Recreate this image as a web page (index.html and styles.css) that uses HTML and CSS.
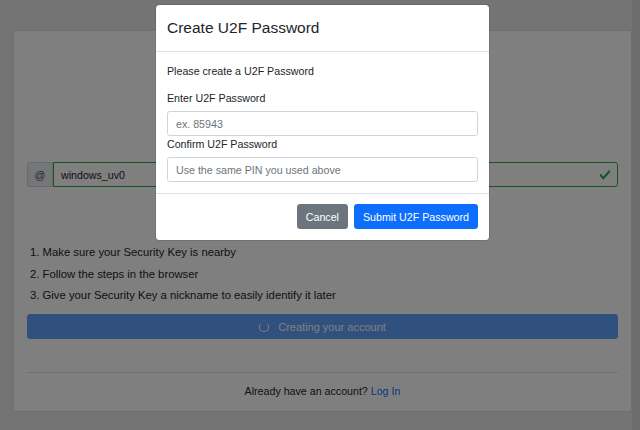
FILE: index.html
```html
<!DOCTYPE html>
<html lang="en">
<head>
<meta charset="utf-8">
<title>Create U2F Password</title>
<link rel="stylesheet" href="styles.css">
</head>
<body>
<main class="page">
  <section class="card">
    <div class="card-top"></div>
    <div class="input-group">
      <span class="addon">@</span>
      <div class="field valid">
        <span class="value">windows_uv0</span>
        <svg class="check" viewBox="0 0 8 8" width="12" height="12"><path fill="#28a745" d="M2.3 6.73L.6 4.53c-.4-1.04.46-1.4 1.1-.8l1.1 1.4 3.4-3.8c.6-.63 1.6-.27 1.2.7l-4 4.6c-.43.5-.8.4-1.1.1z"/></svg>
      </div>
    </div>
    <ol class="steps">
      <li>Make sure your Security Key is nearby</li>
      <li>Follow the steps in the browser</li>
      <li>Give your Security Key a nickname to easily identify it later</li>
    </ol>
    <button class="btn-create" disabled><span class="spinner"></span>Creating your account</button>
    <hr class="divider">
    <p class="login">Already have an account? <a href="#">Log In</a></p>
  </section>
</main>
<div class="backdrop"></div>
<div class="modal">
  <div class="modal-header">
    <h5 class="modal-title">Create U2F Password</h5>
  </div>
  <div class="modal-body">
    <p class="intro">Please create a U2F Password</p>
    <label class="label">Enter U2F Password</label>
    <div class="text-input placeholder">ex. 85943</div>
    <label class="label">Confirm U2F Password</label>
    <div class="text-input placeholder">Use the same PIN you used above</div>
  </div>
  <div class="modal-footer">
    <button class="btn btn-secondary">Cancel</button>
    <button class="btn btn-primary">Submit U2F Password</button>
  </div>
</div>
</body>
</html>
```
FILE: styles.css
```css
html {
  background: linear-gradient(to right, #e8e8e8 calc(100% - 8px), #dadada 0);
  min-height: 100%;
}
body {
  margin: 0;
  font-family: "Liberation Sans", Arial, sans-serif;
  font-size: 10.67px;
  line-height: 16px;
  color: #212529;
}
.page {
  padding: 30px 8px 0 13px;
}
.card {
  background: #fff;
  border: 1px solid rgba(0, 0, 0, 0.125);
  border-radius: 3px;
  padding: 0 13px 12px 13px;
  display: flex;
  flex-direction: column;
}
.card-top {
  height: 131px;
}
.input-group {
  display: flex;
  height: 25px;
}
.addon {
  width: 24px;
  display: flex;
  align-items: center;
  justify-content: center;
  background: #e9ecef;
  border: 1px solid #ced4da;
  border-radius: 2.7px 0 0 2.7px;
  color: #495057;
}
.field {
  flex: 1;
  display: flex;
  align-items: center;
  justify-content: space-between;
  border: 1px solid #28a745;
  border-radius: 0 2.7px 2.7px 0;
  padding: 0 6px 0 7px;
  color: #212529;
  background: #fff;
}
.check {
  display: block;
}
.steps {
  margin: 57px 0 0;
  padding: 0 0 0 3px;
  list-style-position: inside;
  font-size: 11.3px;
  display: flex;
  flex-direction: column;
  gap: 5.5px;
}
.btn-create {
  margin-top: 11px;
  height: 25px;
  border: 1px solid #0d6efd;
  background: #0d6efd;
  opacity: 0.65;
  color: #fff;
  border-radius: 2.7px;
  font: inherit;
  font-size: 11px;
  display: flex;
  align-items: center;
  justify-content: center;
  gap: 9px;
}
.spinner {
  width: 8px;
  height: 8px;
  border: 1.6px solid #fff;
  border-top-color: transparent;
  border-radius: 50%;
}
.divider {
  margin: 33px 0 0;
  border: 0;
  border-top: 1px solid rgba(0, 0, 0, 0.1);
}
.login {
  margin: 10px 0 0;
  text-align: center;
}
.login a {
  color: #0d6efd;
  text-decoration: none;
}
.backdrop {
  position: absolute;
  top: 0;
  left: 0;
  width: 100%;
  height: 100%;
  z-index: 10;
  background: rgba(0, 0, 0, 0.5);
}
.modal {
  position: absolute;
  z-index: 11;
  top: 5px;
  left: 156px;
  width: 333px;
  background: #fff;
  border-radius: 3.5px;
  box-shadow: 0 0 0 1px rgba(0, 0, 0, 0.1);
}
.modal-header {
  padding: 11px;
  border-bottom: 1px solid #dee2e6;
}
.modal-title {
  margin: 0;
  font-size: 15.5px;
  line-height: 24px;
  font-weight: 400;
}
.modal-body {
  padding: 11px;
  display: flex;
  flex-direction: column;
}
.intro {
  margin: 0 0 11px;
}
.label {
  margin-bottom: 5px;
}
.text-input {
  height: 25px;
  box-sizing: border-box;
  border: 1px solid #ced4da;
  border-radius: 2.7px;
  padding: 0 8px;
  display: flex;
  align-items: center;
}
.placeholder {
  color: #6c757d;
}
.modal-footer {
  border-top: 1px solid #dee2e6;
  padding: 10px 11px 11px;
  display: flex;
  justify-content: flex-end;
  gap: 6px;
}
.btn {
  height: 25px;
  padding: 0 8px;
  border-radius: 2.7px;
  font: inherit;
  color: #fff;
  border: 1px solid transparent;
}
.btn-secondary {
  background: #6c757d;
  border-color: #6c757d;
}
.btn-primary {
  background: #0d6efd;
  border-color: #0d6efd;
}
```
